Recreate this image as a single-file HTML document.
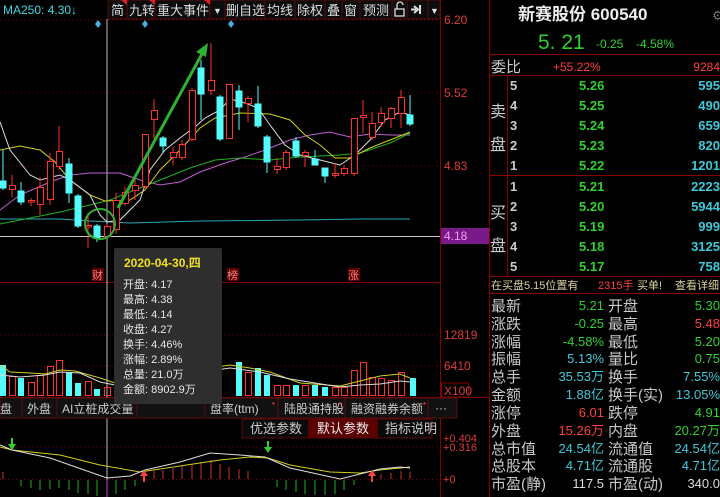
<!DOCTYPE html>
<html><head><meta charset="utf-8"><style>
html,body{margin:0;padding:0;background:#000;overflow:hidden}
svg{display:block}
text{font-family:"Liberation Sans","Noto Sans CJK SC",sans-serif}
</style></head><body>
<svg width="720" height="497" viewBox="0 0 720 497" xmlns="http://www.w3.org/2000/svg">
<rect width="720" height="497" fill="#000"/>
<g stroke="#7a0000" stroke-dasharray="1,3" stroke-width="1">
<line x1="0" y1="20" x2="440" y2="20"/><line x1="0" y1="93" x2="440" y2="93"/><line x1="0" y1="166" x2="440" y2="166"/>
<line x1="0" y1="335" x2="440" y2="335"/><line x1="0" y1="366" x2="440" y2="366"/>
<line x1="0" y1="447" x2="440" y2="447"/>
</g>
<g stroke="#8a0000" stroke-width="1">
<line x1="440.5" y1="0" x2="440.5" y2="497"/>
<line x1="489.5" y1="0" x2="489.5" y2="497"/>
<line x1="0" y1="282.5" x2="440" y2="282.5"/>
<line x1="0" y1="397.5" x2="490" y2="397.5"/>
<line x1="0" y1="479.5" x2="440" y2="479.5" stroke-dasharray="1,3"/>
</g>
<g font-size="12" fill="#e03c3c">
<text x="444" y="24">6.20</text><text x="444" y="97">5.52</text><text x="444" y="170">4.83</text>
<text x="444" y="339">12819</text><text x="444" y="370">6410</text>
<text x="443" y="442" font-size="11">+0.404</text><text x="443" y="451" font-size="11">+0.316</text><text x="443" y="483" font-size="11">+0</text>
</g>
<rect x="441" y="228" width="48" height="16" fill="#7a1a8a"/>
<text x="444" y="240" font-size="12" fill="#f0a0f0">4.18</text>
<rect x="441.5" y="383" width="27" height="14" fill="none" stroke="#8a0000"/>
<text x="444" y="395" font-size="12" fill="#e03c3c">X100</text>
<text x="3" y="14" font-size="12" fill="#40d8e0">MA250: 4.30↓</text>
<g font-size="13" fill="#ddd">
<rect x="108" y="0" width="332" height="19" fill="#0c0c0c" stroke="#5a0a0a"/>
<g stroke="#5a0a0a"><line x1="127" y1="0" x2="127" y2="19"/><line x1="155" y1="0" x2="155" y2="19"/><line x1="210" y1="0" x2="210" y2="19"/><line x1="225" y1="0" x2="225" y2="19"/><line x1="265" y1="0" x2="265" y2="19"/><line x1="295" y1="0" x2="295" y2="19"/><line x1="325" y1="0" x2="325" y2="19"/><line x1="342" y1="0" x2="342" y2="19"/><line x1="360" y1="0" x2="360" y2="19"/><line x1="392" y1="0" x2="392" y2="19"/><line x1="407" y1="0" x2="407" y2="19"/><line x1="428" y1="0" x2="428" y2="19"/></g>
<text x="111" y="15">简</text><text x="129" y="15">九转</text><text x="157" y="15">重大事件</text><text x="213" y="14" font-size="9">▼</text>
<text x="226" y="15">删自选</text><text x="267" y="15">均线</text><text x="297" y="15">除权</text><text x="327" y="15">叠</text><text x="344" y="15">窗</text><text x="363" y="15">预测</text>
<text x="430" y="14" font-size="9">▼</text>
<polygon points="121,0 127,0 127,5" fill="#e02020"/><polygon points="149,0 155,0 155,5" fill="#e02020"/><polygon points="204,0 210,0 210,5" fill="#e02020"/>
<rect x="395" y="9" width="9" height="7" fill="none" stroke="#ddd" stroke-width="1.3"/><path d="M397 9 V5 a3 3 0 0 1 6 0" fill="none" stroke="#ddd" stroke-width="1.3"/>
<path d="M411 9.5 H416 M414 6 L418 9.5 L414 13 M420 5 V14" stroke="#ddd" stroke-width="2" fill="none"/>
</g>
<g fill="#4ab0e0"><polygon points="98,20 101,24 98,28 95,24"/><polygon points="145,20 148,24 145,28 142,24"/><polygon points="231,20 234,24 231,28 228,24"/></g>
<line x1="107" y1="19" x2="107" y2="480" stroke="#bbb" stroke-width="1"/>
<line x1="0" y1="236.5" x2="440" y2="236.5" stroke="#ccc" stroke-width="1"/>
<g fill="none" stroke-width="1">
<polyline stroke="#2aa8b0" points="0,219 60,219 90,221 130,223 200,221 300,220 360,219 410,219"/>
<polyline stroke="#c060d0" points="0,210 20,195 50,182 70,175 90,173 120,173 140,180 160,185 180,182 200,172 225,163 245,157 265,150 290,140 310,135 330,132 350,137 370,134 390,135 410,135"/>
<polyline stroke="#20b020" points="0,224 30,218 60,212 90,205 110,200 140,188 160,180 190,168 215,160 240,158 270,160 300,157 340,155 360,153 390,143 410,133"/>
<polyline stroke="#d0d020" points="0,150 20,146 40,150 55,162 70,180 90,195 105,201 130,200 145,190 160,170 180,150 200,128 215,118 240,113 270,114 290,120 305,135 320,145 335,158 350,158 370,148 390,140 410,132"/>
<polyline stroke="#ddd" points="0,122 10,150 30,175 40,180 60,175 70,180 90,195 100,215 107,222 120,220 140,200 150,170 165,150 180,138 195,127 205,118 220,110 230,99 245,103 258,108 270,125 285,145 300,155 320,160 340,165 355,155 370,140 385,120 400,112 410,115"/>
</g>
<g stroke-width="1">
<g stroke="#54fcfc" fill="#54fcfc">
<line x1="3" y1="150" x2="3" y2="190"/><rect x="0" y="181" width="6" height="7"/>
<line x1="21" y1="182" x2="21" y2="205"/><rect x="18" y="191" width="6" height="11"/>
<line x1="69" y1="158" x2="69" y2="203"/><rect x="66" y="164" width="6" height="29"/>
<line x1="78" y1="194" x2="78" y2="228"/><rect x="75" y="196" width="6" height="30"/>
<line x1="97" y1="224" x2="97" y2="242"/><rect x="94" y="226" width="6" height="12"/>
<line x1="163" y1="136" x2="163" y2="153"/><rect x="160" y="138" width="6" height="8"/>
<line x1="201" y1="60" x2="201" y2="120"/><rect x="198" y="68" width="6" height="26"/>
<line x1="220" y1="95" x2="220" y2="141"/><rect x="217" y="97" width="6" height="42"/>
<line x1="239" y1="85" x2="239" y2="130"/><rect x="236" y="91" width="6" height="16"/>
<line x1="258" y1="86" x2="258" y2="128"/><rect x="255" y="104" width="6" height="22"/>
<line x1="267" y1="135" x2="267" y2="173"/><rect x="264" y="137" width="6" height="25"/>
<line x1="296" y1="137" x2="296" y2="157"/><rect x="293" y="141" width="6" height="15"/>
<line x1="315" y1="150" x2="315" y2="165"/><rect x="312" y="159" width="6" height="6"/>
<line x1="325" y1="168" x2="325" y2="183"/><rect x="322" y="168" width="6" height="8"/>
<line x1="410" y1="95" x2="410" y2="126"/><rect x="407" y="115" width="6" height="9"/>
</g>
<g stroke="#ff3030" fill="#000">
<line x1="12" y1="175" x2="12" y2="197"/><rect x="9.5" y="185.5" width="6" height="4"/>
<line x1="31" y1="198" x2="31" y2="206"/><rect x="28.5" y="200.5" width="6" height="1.5"/>
<line x1="40" y1="177" x2="40" y2="215"/><rect x="37.5" y="187.5" width="6" height="17"/>
<line x1="50" y1="153" x2="50" y2="205"/><rect x="47.5" y="161.5" width="6" height="38"/>
<line x1="59" y1="126" x2="59" y2="170"/><rect x="56.5" y="151.5" width="6" height="15"/>
<line x1="88" y1="213" x2="88" y2="248"/><rect x="85.5" y="225.5" width="6" height="1.5"/>
<line x1="107" y1="224" x2="107" y2="238"/><rect x="104.5" y="226.5" width="6" height="10"/>
<line x1="116" y1="193" x2="116" y2="234"/><rect x="113.5" y="200.5" width="6" height="29"/>
<line x1="125" y1="187" x2="125" y2="206"/><rect x="122.5" y="192.5" width="6" height="11"/>
<line x1="135" y1="177" x2="135" y2="200"/><rect x="132.5" y="185.5" width="6" height="5"/>
<line x1="145" y1="134" x2="145" y2="188"/><rect x="142.5" y="134.5" width="6" height="52"/>
<line x1="154" y1="99" x2="154" y2="140"/><rect x="151.5" y="110.5" width="6" height="9"/>
<line x1="173" y1="147" x2="173" y2="165"/><rect x="170.5" y="152.5" width="6" height="5"/>
<line x1="182" y1="140" x2="182" y2="160"/><rect x="179.5" y="144.5" width="6" height="13"/>
<line x1="192" y1="88" x2="192" y2="141"/><rect x="189.5" y="90.5" width="6" height="49"/>
<line x1="211" y1="43" x2="211" y2="95"/><rect x="208.5" y="80.5" width="6" height="10"/>
<line x1="229" y1="84" x2="229" y2="139"/><rect x="226.5" y="84.5" width="6" height="54"/>
<line x1="248" y1="96" x2="248" y2="122"/><rect x="245.5" y="98.5" width="6" height="5"/>
<line x1="277" y1="158" x2="277" y2="174"/><rect x="274.5" y="166.5" width="6" height="3"/>
<line x1="286" y1="150" x2="286" y2="170"/><rect x="283.5" y="152.5" width="6" height="15"/>
<line x1="305" y1="150" x2="305" y2="167"/><rect x="302.5" y="152.5" width="6" height="3"/>
<line x1="335" y1="163" x2="335" y2="178"/><rect x="332.5" y="173.5" width="6" height="2"/>
<line x1="344" y1="165" x2="344" y2="176"/><rect x="341.5" y="168.5" width="6" height="5"/>
<line x1="354" y1="118" x2="354" y2="176"/><rect x="351.5" y="118.5" width="6" height="55"/>
<line x1="363" y1="100" x2="363" y2="133"/><rect x="360.5" y="115.5" width="6" height="2"/>
<line x1="372" y1="112" x2="372" y2="140"/><rect x="369.5" y="123.5" width="6" height="14"/>
<line x1="381" y1="107" x2="381" y2="127"/><rect x="378.5" y="113.5" width="6" height="9"/>
<line x1="391" y1="107" x2="391" y2="128"/><rect x="388.5" y="108.5" width="6" height="10"/>
<line x1="401" y1="90" x2="401" y2="128"/><rect x="398.5" y="97.5" width="6" height="16"/>
</g>
</g>
<line x1="118" y1="208" x2="203" y2="52" stroke="#30b030" stroke-width="3"/>
<polygon points="208,43 196,52 206,57" fill="#30b030"/>
<circle cx="100" cy="224" r="15" fill="none" stroke="#30b030" stroke-width="2"/>
<g font-size="11" fill="#e04040">
<rect x="92" y="268" width="12" height="13" fill="#5a0000"/><text x="92" y="279" fill="#ff8080">财</text>
<rect x="227" y="268" width="12" height="13" fill="#5a0000"/><text x="227" y="279" fill="#ff8080">榜</text>
<rect x="348" y="268" width="12" height="13" fill="#5a0000"/><text x="348" y="279" fill="#ff8080">涨</text>
</g>
<g fill="#54fcfc">
<rect x="0" y="365" width="6" height="31"/><rect x="18" y="378" width="6" height="18"/><rect x="66" y="372" width="6" height="24"/><rect x="75" y="383" width="6" height="13"/><rect x="94" y="389" width="6" height="7"/>
<rect x="236" y="362" width="6" height="34"/><rect x="255" y="368" width="6" height="28"/><rect x="264" y="375" width="6" height="21"/><rect x="293" y="385" width="6" height="11"/><rect x="312" y="385" width="6" height="11"/><rect x="322" y="387" width="6" height="9"/><rect x="410" y="378" width="6" height="18"/>
</g>
<g fill="none" stroke="#ff3030">
<rect x="9.5" y="376.5" width="6" height="19"/><rect x="28.5" y="382.5" width="6" height="13"/><rect x="37.5" y="375.5" width="6" height="20"/><rect x="47.5" y="366.5" width="6" height="29"/><rect x="56.5" y="360.5" width="6" height="35"/><rect x="85.5" y="381.5" width="6" height="14"/><rect x="104.5" y="387.5" width="6" height="8"/>
<rect x="245.5" y="372.5" width="6" height="23"/><rect x="274.5" y="385.5" width="6" height="10"/><rect x="283.5" y="385.5" width="6" height="10"/><rect x="302.5" y="385.5" width="6" height="10"/><rect x="332.5" y="387.5" width="6" height="8"/><rect x="341.5" y="387.5" width="6" height="8"/><rect x="351.5" y="370.5" width="6" height="25"/><rect x="360.5" y="362.5" width="6" height="33"/><rect x="369.5" y="377.5" width="6" height="18"/><rect x="378.5" y="378.5" width="6" height="17"/><rect x="388.5" y="380.5" width="6" height="15"/><rect x="398.5" y="372.5" width="6" height="23"/>
</g>
<g fill="none" stroke-width="1">
<polyline stroke="#d0d020" points="0,365 10,372 30,373 45,374 60,370 75,371 100,378 115,383 230,365 250,368 270,372 300,383 340,386 360,381 380,376 400,374 410,378"/>
<polyline stroke="#ddd" points="0,375 20,377 45,375 60,372 80,373 100,382 115,385 230,368 260,372 290,379 340,387 360,385 380,384 400,381 410,382"/>
</g>
<g font-size="12" fill="#ccc">
<rect x="0" y="398" width="457" height="20" fill="#111" stroke="#5a0a0a"/>
<g stroke="#5a0a0a"><line x1="22" y1="398" x2="22" y2="418"/><line x1="57" y1="398" x2="57" y2="418"/><line x1="137" y1="398" x2="137" y2="418"/><line x1="205" y1="398" x2="205" y2="418"/><line x1="278" y1="398" x2="278" y2="418"/><line x1="345" y1="398" x2="345" y2="418"/><line x1="428" y1="398" x2="428" y2="418"/></g>
<text x="0" y="413">盘</text><text x="27" y="413">外盘</text><text x="62" y="413">AI立桩成交量</text><text x="210" y="413">盘率(ttm)</text><text x="284" y="413">陆股通持股</text><text x="351" y="413">融资融券余额</text><text x="435" y="412">···</text>
<g fill="#ff3030" font-size="8"><text x="272" y="406">•</text><text x="339" y="406">•</text><text x="423" y="406">•</text></g>
<rect x="242" y="419" width="190" height="19" fill="#0a0a0a" stroke="#5a0a0a"/>
<rect x="308" y="419" width="70" height="19" fill="#5a0000"/>
<g font-size="13"><text x="250" y="433">优选参数</text><text x="317" y="433" fill="#eee">默认参数</text><text x="385" y="433">指标说明</text></g>
</g>
<g stroke-width="1">
<g stroke="#d03030">
<line x1="3" y1="472" x2="3" y2="479"/><line x1="144" y1="474" x2="144" y2="479"/><line x1="154" y1="471" x2="154" y2="479"/><line x1="163" y1="470" x2="163" y2="479"/><line x1="173" y1="468" x2="173" y2="479"/><line x1="182" y1="466" x2="182" y2="479"/><line x1="192" y1="465" x2="192" y2="479"/><line x1="201" y1="462" x2="201" y2="479"/><line x1="211" y1="460" x2="211" y2="479"/><line x1="220" y1="464" x2="220" y2="479"/><line x1="229" y1="467" x2="229" y2="479"/><line x1="239" y1="469" x2="239" y2="479"/><line x1="248" y1="471" x2="248" y2="479"/>
<line x1="372" y1="475" x2="372" y2="479"/><line x1="381" y1="474" x2="381" y2="479"/><line x1="391" y1="473" x2="391" y2="479"/><line x1="401" y1="471" x2="401" y2="479"/><line x1="410" y1="472" x2="410" y2="479"/>
</g>
<g stroke="#20b020">
<line x1="21" y1="480" x2="21" y2="486"/><line x1="31" y1="480" x2="31" y2="488"/><line x1="40" y1="480" x2="40" y2="490"/><line x1="50" y1="480" x2="50" y2="489"/><line x1="59" y1="480" x2="59" y2="488"/><line x1="69" y1="480" x2="69" y2="490"/><line x1="78" y1="480" x2="78" y2="493"/><line x1="88" y1="480" x2="88" y2="494"/><line x1="97" y1="480" x2="97" y2="496"/><line x1="116" y1="480" x2="116" y2="494"/><line x1="125" y1="480" x2="125" y2="490"/><line x1="135" y1="480" x2="135" y2="486"/>
<line x1="277" y1="480" x2="277" y2="487"/><line x1="286" y1="480" x2="286" y2="490"/><line x1="296" y1="480" x2="296" y2="492"/><line x1="305" y1="480" x2="305" y2="494"/><line x1="315" y1="480" x2="315" y2="495"/><line x1="325" y1="480" x2="325" y2="495"/><line x1="335" y1="480" x2="335" y2="494"/><line x1="344" y1="480" x2="344" y2="490"/><line x1="354" y1="480" x2="354" y2="485"/>
</g>
<line x1="107" y1="480" x2="107" y2="497" stroke="#d040d0"/>
</g>
<g fill="none">
<polyline stroke="#d0d020" points="0,447 12,450 60,455 100,465 140,472 180,466 220,460 250,457 268,458 290,465 330,472 360,473 380,470 400,468 410,467"/>
<polyline stroke="#ddd" points="0,445 12,450 50,458 107,478 130,476 145,470 180,462 210,453 240,455 265,457 290,468 340,479 360,474 380,469 400,467 410,468"/>
</g>
<g fill="#30d030"><rect x="11" y="438" width="2" height="6"/><polygon points="8,444 16,444 12,450"/><rect x="267" y="441" width="2" height="6"/><polygon points="264,447 272,447 268,453"/></g>
<g fill="#ff4040"><rect x="143" y="476" width="2" height="6"/><polygon points="140,476 148,476 144,470"/><rect x="371" y="476" width="2" height="6"/><polygon points="368,476 376,476 372,470"/></g>
<rect x="114" y="248" width="108" height="156" fill="#2e2e2e" rx="2"/>
<text x="124" y="267" font-size="12" font-weight="bold" fill="#f0e020">2020-04-30,四</text>
<g font-size="11" fill="#e6e6e6">
<text x="123" y="288">开盘: 4.17</text><text x="123" y="303">最高: 4.38</text><text x="123" y="318">最低: 4.14</text><text x="123" y="333">收盘: 4.27</text><text x="123" y="348">换手: 4.46%</text><text x="123" y="363">涨幅: 2.89%</text><text x="123" y="378">总量: 21.0万</text><text x="123" y="393">金额: 8902.9万</text>
</g>
<text x="518" y="20" font-size="17" font-weight="bold" fill="#eee">新赛股份 600540</text>
<text x="712" y="20" font-size="13" fill="#777">⚙</text>
<text x="538" y="49" font-size="21" fill="#30d030">5. 21</text>
<text x="596" y="48" font-size="12" fill="#30d030">-0.25</text>
<text x="636" y="48" font-size="12" fill="#30d030">-4.58%</text>
<g stroke="#8a0000"><line x1="490" y1="54.5" x2="720" y2="54.5"/><line x1="490" y1="75.5" x2="720" y2="75.5"/><line x1="490" y1="175.5" x2="720" y2="175.5"/><line x1="490" y1="276.5" x2="720" y2="276.5"/><line x1="490" y1="293.5" x2="720" y2="293.5"/><line x1="507.5" y1="75" x2="507.5" y2="276"/></g>
<text x="491" y="72" font-size="15" fill="#ccc">委比</text>
<text x="553" y="71" font-size="12" fill="#ff4040">+55.22%</text>
<text x="720" y="71" font-size="12" fill="#ff4040" text-anchor="end">9284</text>
<g font-size="16" fill="#ccc"><text x="490" y="117">卖</text><text x="490" y="150">盘</text><text x="490" y="218">买</text><text x="490" y="251">盘</text></g>
<g font-size="13" fill="#ccc" font-weight="bold">
<text x="510" y="90">5</text><text x="510" y="110">4</text><text x="510" y="130">3</text><text x="510" y="150">2</text><text x="510" y="170">1</text>
<text x="510" y="191">1</text><text x="510" y="211">2</text><text x="510" y="231">3</text><text x="510" y="251">4</text><text x="510" y="271">5</text>
</g>
<g font-size="13" fill="#30d030" font-weight="bold">
<text x="579" y="90">5.26</text><text x="579" y="110">5.25</text><text x="579" y="130">5.24</text><text x="579" y="150">5.23</text><text x="579" y="170">5.22</text>
<text x="579" y="191">5.21</text><text x="579" y="211">5.20</text><text x="579" y="231">5.19</text><text x="579" y="251">5.18</text><text x="579" y="271">5.17</text>
</g>
<g font-size="13" fill="#40c8d8" text-anchor="end" font-weight="bold">
<text x="720" y="90">595</text><text x="720" y="110">490</text><text x="720" y="130">659</text><text x="720" y="150">820</text><text x="720" y="170">1201</text>
<text x="720" y="191">2223</text><text x="720" y="211">5944</text><text x="720" y="231">999</text><text x="720" y="251">3125</text><text x="720" y="271">758</text>
</g>
<g font-size="11">
<text x="491" y="289" fill="#d8d0a0">在买盘5.15位置有</text><text x="598" y="289" fill="#ff4040">2315手</text><text x="637" y="289" fill="#d8d0a0">买单!</text><text x="675" y="289" fill="#d8d0a0">查看详细</text>
</g>
<g font-size="15" fill="#c8c8c8">
<text x="491" y="311">最新</text><text x="491" y="329">涨跌</text><text x="491" y="347">涨幅</text><text x="491" y="364">振幅</text><text x="491" y="382">总手</text><text x="491" y="400">金额</text><text x="491" y="418">涨停</text><text x="491" y="436">外盘</text><text x="491" y="454">总市值</text><text x="491" y="471">总股本</text><text x="491" y="489">市盈(静)</text>
<text x="608" y="311">开盘</text><text x="608" y="329">最高</text><text x="608" y="347">最低</text><text x="608" y="364">量比</text><text x="608" y="382">换手</text><text x="608" y="400">换手(实)</text><text x="608" y="418">跌停</text><text x="608" y="436">内盘</text><text x="608" y="454">流通值</text><text x="608" y="471">流通股</text><text x="608" y="489">市盈(动)</text>
</g>
<g font-size="13" text-anchor="end">
<text x="604" y="310" fill="#30d030">5.21</text><text x="604" y="328" fill="#30d030">-0.25</text><text x="604" y="346" fill="#30d030">-4.58%</text><text x="604" y="363" fill="#40c8d8">5.13%</text><text x="604" y="381" fill="#40c8d8">35.53万</text><text x="604" y="399" fill="#40c8d8">1.88亿</text><text x="604" y="417" fill="#ff4040">6.01</text><text x="604" y="435" fill="#ff4040">15.26万</text><text x="604" y="453" fill="#40c8d8">24.54亿</text><text x="604" y="470" fill="#40c8d8">4.71亿</text><text x="604" y="488" fill="#ddd">117.5</text>
<text x="720" y="310" fill="#30d030">5.30</text><text x="720" y="328" fill="#ff4040">5.48</text><text x="720" y="346" fill="#30d030">5.20</text><text x="720" y="363" fill="#30d030">0.75</text><text x="720" y="381" fill="#40c8d8">7.55%</text><text x="720" y="399" fill="#40c8d8">13.05%</text><text x="720" y="417" fill="#30d030">4.91</text><text x="720" y="435" fill="#30d030">20.27万</text><text x="720" y="453" fill="#40c8d8">24.54亿</text><text x="720" y="470" fill="#40c8d8">4.71亿</text><text x="720" y="488" fill="#ddd">340.0</text>
</g>
</svg>
</body></html>
